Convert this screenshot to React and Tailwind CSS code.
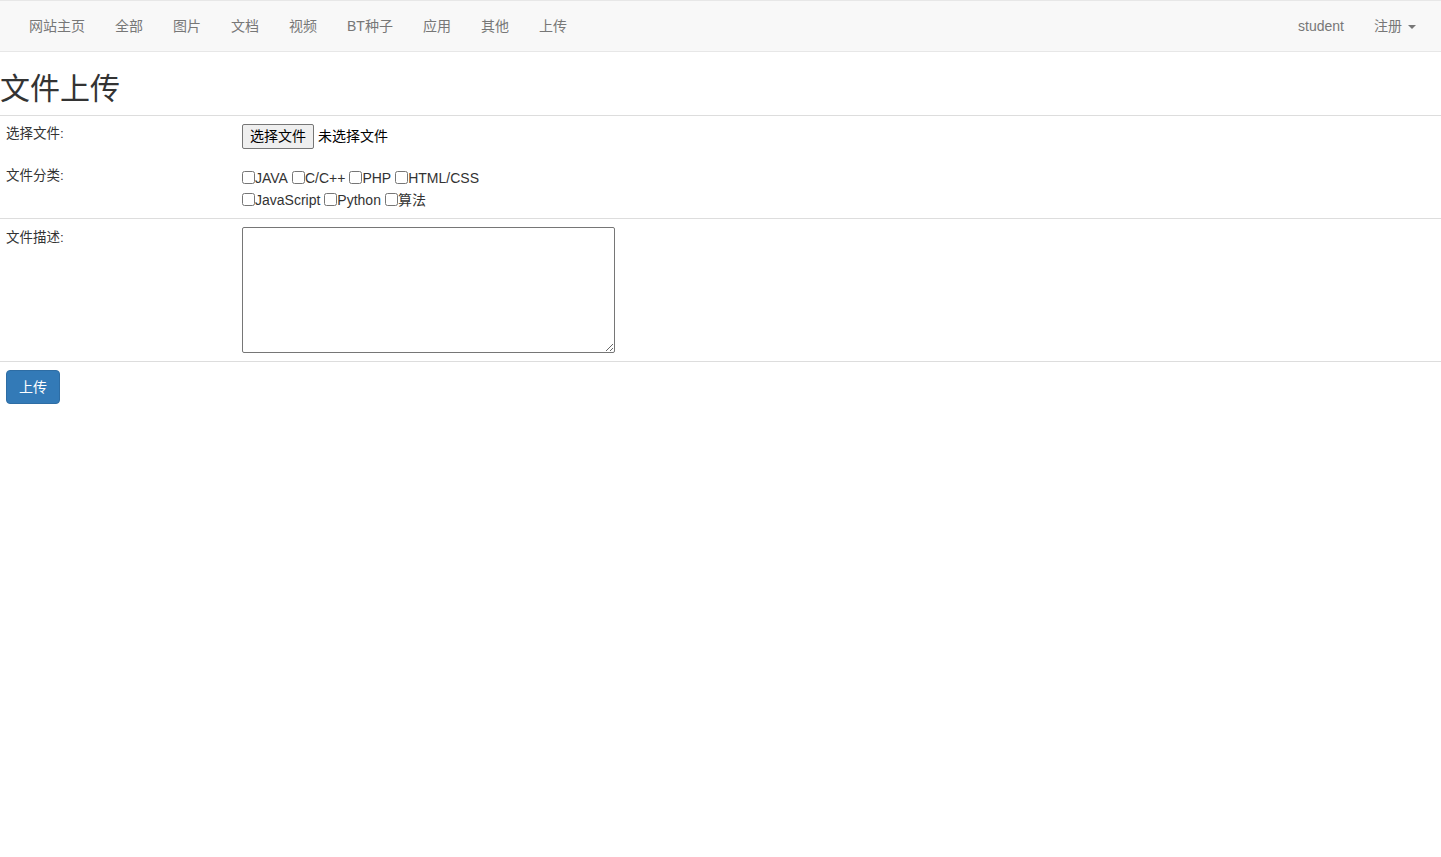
import React from 'react';

const font = { fontFamily: '"Liberation Sans", "Noto Sans CJK SC", sans-serif' };

const navItems = ['网站主页', '全部', '图片', '文档', '视频', 'BT种子', '应用', '其他', '上传'];
const categories = [['JAVA', 'C/C++', 'PHP', 'HTML/CSS'], ['JavaScript', 'Python', '算法']];

export default function App() {
  return (
    <div className="min-h-screen bg-white text-[#333] text-[14px]" style={font}>
      {/* navbar */}
      <nav className="h-[52px] bg-[#f8f8f8] border-y border-[#e7e7e7] flex items-center justify-between px-[14px]">
        <ul className="flex">
          {navItems.map((item) => (
            <li key={item}>
              <a className="block px-[15px] leading-[20px] text-[#777]">{item}</a>
            </li>
          ))}
        </ul>
        <ul className="flex mr-[-4px]">
          <li><a className="block px-[15px] leading-[20px] text-[#777]">student</a></li>
          <li>
            <a className="flex items-center px-[15px] leading-[20px] text-[#777]">
              注册
              <span className="ml-[6px] mt-[2px] w-0 h-0 border-x-[4px] border-x-transparent border-t-[4px] border-t-[#777]"></span>
            </a>
          </li>
        </ul>
      </nav>

      <h2 className="text-[30px] leading-[33px] mt-[20px] mb-[10px] font-normal">文件上传</h2>

      {/* form table */}
      <div className="border-t border-[#ddd]">
        <div className="grid grid-cols-[236px_1fr] pt-[8px] pb-[10px]">
          <div className="px-[6px] text-[13.5px]">选择文件:</div>
          <div className="px-[6px] flex items-center h-[25px]">
            <button className="h-[25px] px-[7px] bg-[#efefef] border border-[#767676] rounded-[2px] text-[14px] text-black">选择文件</button>
            <span className="ml-[4px] text-black">未选择文件</span>
          </div>
        </div>
        <div className="grid grid-cols-[236px_1fr] pt-[8px] pb-[7px]">
          <div className="px-[6px] text-[13.5px] mt-[-1px]">文件分类:</div>
          <div className="px-[6px] flex flex-col">
            {categories.map((row, i) => (
              <div key={i} className="flex items-center h-[22px]">
                {row.map((c) => (
                  <label key={c} className="flex items-center mr-[4px]">
                    <input type="checkbox" className="m-0 mt-[-2px] w-[13px] h-[13px]" />
                    <span>{c}</span>
                  </label>
                ))}
              </div>
            ))}
          </div>
        </div>
      </div>

      <div className="border-t border-[#ddd] grid grid-cols-[236px_1fr] py-[8px]">
        <div className="px-[6px] text-[13.5px] pt-[1px]">文件描述:</div>
        <div className="px-[6px]">
          <textarea className="block w-[373px] h-[126px] border border-[#767676] rounded-[2px] bg-white"></textarea>
        </div>
      </div>

      <div className="border-t border-[#ddd] px-[6px] pt-[8px]">
        <button className="h-[34px] px-[12px] bg-[#337ab7] border border-[#2e6da4] rounded-[4px] text-white text-[14px]">上传</button>
      </div>
    </div>
  );
}
